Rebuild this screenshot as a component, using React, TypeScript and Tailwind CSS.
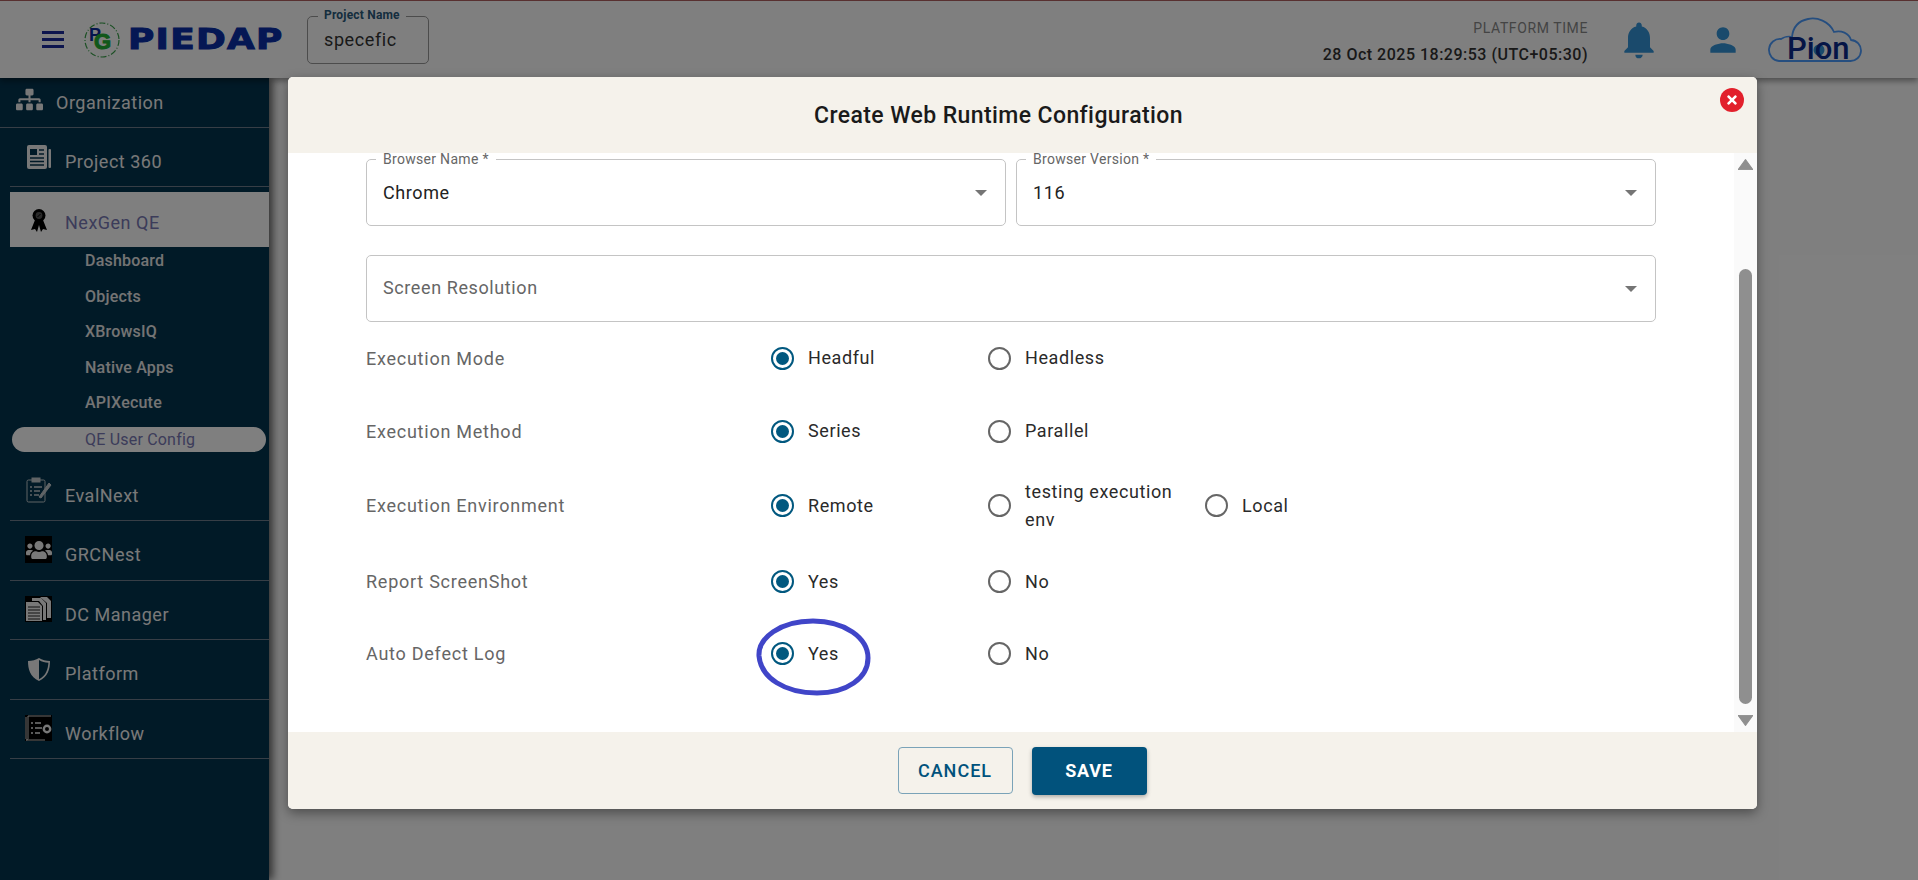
import { ReactNode } from "react"
import { FaSitemap, FaUsers, FaTimes } from "react-icons/fa"
import { MdNotifications, MdPerson } from "react-icons/md"

const RibbonIcon = () => (
  <svg viewBox="0 0 18 24" className="w-[18px] h-[24px]">
    <path d="M5 12 L1 22 L5 21 L7 24 L9 17 L11 24 L13 21 L17 22 L13 12 Z" fill="#000" />
    <circle cx="9" cy="7.5" r="6.5" fill="#000" />
    <circle cx="9" cy="7.5" r="3.4" fill="#555" />
    <path d="M7.5 9 L10.5 6" stroke="#000" strokeWidth="1" />
  </svg>
)

const PageIcon = () => (
  <svg viewBox="0 0 24 24" className="w-[24px] h-[24px]">
    <path d="M2 0 H18 Q20 0 20 2 V22 Q20 24 18 24 H2 Q0 24 0 22 V2 Q0 0 2 0 Z" fill="#f0f0f0" />
    <rect x="21.5" y="4" width="2.5" height="19" rx="1" fill="#f0f0f0" />
    <rect x="3" y="4" width="7" height="6" fill="#03344f" />
    <path d="M12 5 h5 M12 9 h5 M3 13 h14 M3 16.5 h14 M3 20 h14" stroke="#03344f" strokeWidth="1.6" />
  </svg>
)

const ClipboardIcon = () => (
  <svg viewBox="0 0 26 26" className="w-[26px] h-[26px]" fill="none" stroke="#c0c8cc" strokeWidth="1">
    <rect x="1" y="3" width="18" height="22" rx="1.5" />
    <rect x="6" y="1" width="8" height="4" fill="#c0c8cc" />
    <path d="M4 10 h2 M8 10 h8 M4 14 h2 M8 14 h6 M4 18 h2 M8 18 h5" strokeWidth="1.4" />
    <path d="M13 20 L23 6 L25 8 L15 21 Z" fill="#c0c8cc" />
  </svg>
)

const DocsIcon = () => (
  <svg viewBox="0 0 27 26" className="w-[27px] h-[26px]">
    <rect width="27" height="26" fill="#000" />
    <path d="M1 6 H13 L17 10 V25 H1 Z" fill="#f0f0f0" />
    <path d="M3 11 H15 M3 14 H15 M3 17 H15 M3 20 H15 M3 23 H15" stroke="#222" strokeWidth="1.2" />
    <path d="M18 10 V24 H21 V7 L16 2 H7 V5 H14 Z M22 7 V22 H26 V5 L22 1 H15 L22 7 Z" fill="#f0f0f0" />
  </svg>
)

const ShieldIcon = () => (
  <svg viewBox="0 0 24 24" className="w-[24px] h-[24px]">
    <path d="M12 1 C9 3 5 4 1 4 C1 12 3 20 12 24 C21 20 23 12 23 4 C19 4 15 3 12 1 Z" fill="#f0f0f0" />
    <path d="M12 3 C15 5 18 5.6 21.4 5.8 C21 12 19 19 12 22.2 Z" fill="#03344f" />
  </svg>
)

const WorkflowIcon = () => (
  <svg viewBox="0 0 27 26" className="w-[27px] h-[26px]">
    <rect width="27" height="26" fill="#000" />
    <path d="M3 1 H26 M3 1 V24 Q3 25 1 25 M1 25 H20 M1 2 V24" stroke="#d8d8d8" strokeWidth="1" fill="none" />
    <path d="M6 8 h2 M10 8 h6 M6 13 h2 M10 13 h7 M6 18 h2 M10 18 h5" stroke="#f0f0f0" strokeWidth="1.6" />
    <circle cx="22" cy="14" r="3.2" fill="none" stroke="#f0f0f0" strokeWidth="2.4" />
  </svg>
)

const subItems = ["Dashboard", "Objects", "XBrowsIQ", "Native Apps", "APIXecute"]

const navBottom = [
  { label: "EvalNext", icon: <ClipboardIcon /> },
  {
    label: "GRCNest",
    icon: (
      <div className="w-[27px] h-[27px] bg-black flex items-center justify-center">
        <FaUsers className="text-[#f0f0f0] text-[26px]" />
      </div>
    ),
  },
  { label: "DC Manager", icon: <DocsIcon /> },
  { label: "Platform", icon: <ShieldIcon /> },
  { label: "Workflow", icon: <WorkflowIcon /> },
]

const NavRow = ({ label, icon }: { label: string; icon: ReactNode }) => (
  <div className="h-[59.5px] ml-[10px] pl-[15px] pt-[9px] flex items-center border-b border-[#6e7d8c] text-[18px] tracking-[0.5px] text-[#f2f2f2]">
    <div className="w-[27px] -mt-[10px] flex justify-center">{icon}</div>
    <span className="ml-[13px]">{label}</span>
  </div>
)

const Sidebar = () => (
  <aside className="w-[269px] h-[802px] bg-[#03344f] shadow-[4px_0_8px_rgba(0,0,0,0.6)] shrink-0">
    <div className="h-[50px] pl-[16px] flex items-center border-b border-[#6e7d8c] text-[18px] tracking-[0.5px] text-[#f2f2f2]">
      <FaSitemap className="text-[#f0f0f0] text-[27px] -mt-[6px]" />
      <span className="ml-[13px]">Organization</span>
    </div>
    <div className="h-[59px] ml-[10px] pl-[15px] pt-[9px] flex items-center border-b border-[#6e7d8c] text-[18px] tracking-[0.5px] text-[#f2f2f2]">
      <div className="w-[27px] -mt-[10px] flex justify-center">
        <PageIcon />
      </div>
      <span className="ml-[13px]">Project 360</span>
    </div>
    <div className="h-[55px] mt-[5px] ml-[10px] pl-[15px] pt-[6px] flex items-center bg-white text-[18px] tracking-[0.5px] text-[#7878b4]">
      <div className="w-[27px] -mt-[6px] flex justify-center">
        <RibbonIcon />
      </div>
      <span className="ml-[13px]">NexGen QE</span>
    </div>
    <div className="-mt-[3.5px]">
      {subItems.map((s) => (
        <div key={s} className="h-[35.5px] pl-[85px] flex items-center text-[16px] font-medium tracking-[0.2px] text-[#e8e8e8]">
          {s}
        </div>
      ))}
    </div>
    <div className="h-[25px] mt-[6px] ml-[12px] mr-[3px] pl-[73px] flex items-center rounded-full bg-white text-[16px] tracking-[0.2px] text-[#7878b4]">
      QE User Config
    </div>
    <div className="mt-[9.5px]">
      {navBottom.map((item) => (
        <NavRow key={item.label} {...item} />
      ))}
    </div>
  </aside>
)

const Header = () => (
  <header className="h-[78px] bg-white border-t border-[#b06060] flex items-center shrink-0 shadow-[0_3px_6px_rgba(0,0,0,0.4)] relative z-10">
    <div className="ml-[42px] w-[22px] flex flex-col gap-[4.5px]">
      <div className="h-[2.5px] bg-[#1a2a9c]" />
      <div className="h-[2.5px] bg-[#1a2a9c]" />
      <div className="h-[2.5px] bg-[#1a2a9c]" />
    </div>
    <svg viewBox="0 0 38 36" className="ml-[19px] w-[38px] h-[36px]">
      <circle cx="19" cy="18" r="17" fill="none" stroke="#3aa04a" strokeWidth="1.2" strokeDasharray="6 2 1 2" />
      <text x="6" y="19" fontFamily="Liberation Sans" fontWeight="700" fontSize="18" fill="#0a2a9c">P</text>
      <text x="11" y="27" fontFamily="Liberation Sans" fontWeight="700" fontSize="22" fill="#22b035" stroke="#22b035" strokeWidth="1">G</text>
    </svg>
    <span className="ml-[7px] w-[153px] font-['DejaVu_Sans',sans-serif] font-bold text-[28px] leading-none text-[#0a2ea8] [-webkit-text-stroke:1px_#0a2ea8] tracking-[1px] scale-x-128 origin-left">
      PIEDAP
    </span>
    <div className="ml-[26px] relative w-[122px] h-[48px] border border-[#999] rounded-[5px] pl-[16px] flex items-center text-[18px] text-[#333] tracking-[0.6px]">
      <span className="absolute -top-[9px] left-[10px] px-[6px] bg-white text-[12px] leading-[14px] font-bold tracking-[0.2px] text-[#2a5a7c]">
        Project Name
      </span>
      specefic
    </div>
    <div className="ml-auto flex flex-col items-end w-[280px] mt-[3px]">
      <span className="text-[14px] leading-[20px] text-[#888] tracking-[0.6px]">PLATFORM TIME</span>
      <span className="mt-[7px] text-[16px] leading-[20px] font-medium text-[#333] tracking-[0.5px]">28 Oct 2025 18:29:53 (UTC+05:30)</span>
    </div>
    <MdNotifications className="ml-[29px] text-[#3494d8] text-[44px] shrink-0" />
    <MdPerson className="ml-[43px] text-[#3494d8] text-[38px] shrink-0" />
    <svg viewBox="0 0 93 45" className="ml-[25px] mr-[58px] w-[93px] h-[45px] shrink-0 overflow-visible">
      <path
        d="M12 44 H83 A10.5 10.5 0 0 0 84 23 C82 16 74 13 67 15 C62 4 50 0 41 2 C31 4 26 10 25 20 C22 19 17 20 14 22 A11 11 0 0 0 12 44 Z"
        fill="none"
        stroke="#4c9cff"
        strokeWidth="1.8"
      />
      <circle cx="52" cy="33" r="5.5" fill="#3494d8" />
      <text x="20" y="42" fontFamily="Roboto" fontWeight="500" fontSize="31" fill="#0a2a8c">Pion</text>
    </svg>
  </header>
)

const Arrow = () => (
  <svg viewBox="0 0 12 6" className="absolute right-[18px] top-1/2 -translate-y-1/2 w-[12px] h-[6px]">
    <path d="M0 0 H12 L6 6 Z" fill="#757575" />
  </svg>
)

const SelectField = ({ label, value, placeholder }: { label?: string; value?: string; placeholder?: string }) => (
  <div className={`relative h-[67px] border border-[#c4c4c4] rounded-[5px] pl-[16px] flex items-center text-[18px] tracking-[0.6px] ${value ? "" : "pb-[2px]"}`}>
    {label && (
      <span className="absolute -top-[9px] left-[9px] px-[7px] bg-white text-[14px] leading-[16px] text-[#666] tracking-[0.3px]">
        {label}
      </span>
    )}
    <span className={value ? "text-[#222]" : "text-[#666]"}>{value ?? placeholder}</span>
    <Arrow />
  </div>
)

const Radio = ({ label, checked }: { label: string; checked?: boolean }) => (
  <div className="w-[217px] flex items-center text-[18px] leading-[28px] tracking-[0.6px] text-[#2a2a2a]">
    <span
      className={`ml-[1px] w-[23px] h-[23px] rounded-full border-2 flex items-center justify-center shrink-0 ${
        checked ? "border-[#01587f]" : "border-[#666]"
      }`}
    >
      {checked && <span className="w-[13px] h-[13px] rounded-full bg-[#01587f]" />}
    </span>
    <span className="ml-[14px] max-w-[160px]">{label}</span>
  </div>
)

const rows = [
  { label: "Execution Mode", h: "h-[72px]", options: ["Headful", "Headless"] },
  { label: "Execution Method", h: "h-[74px]", options: ["Series", "Parallel"] },
  { label: "Execution Environment", h: "h-[75px]", options: ["Remote", "testing execution env", "Local"] },
  { label: "Report ScreenShot", h: "h-[77px]", options: ["Yes", "No"] },
  { label: "Auto Defect Log", h: "h-[67px]", options: ["Yes", "No"] },
]

const Modal = () => (
  <div className="w-[1469px] h-[732px] rounded-[5px] overflow-hidden bg-white flex flex-col shadow-[0_4px_12px_rgba(0,0,0,0.4)]">
    <div className="relative h-[76px] pr-[48px] pt-[2px] bg-[#f5f2eb] flex items-center justify-center text-[23px] font-medium text-[#1a1a1a] tracking-[0.4px] shrink-0">
      Create Web Runtime Configuration
      <div className="absolute left-[1432px] top-[11px] w-[24px] h-[24px] rounded-full bg-[#e2202c] flex items-center justify-center">
        <FaTimes className="text-white text-[14px]" />
      </div>
    </div>

    <div className="relative flex-1 overflow-hidden pl-[78px] pt-[6px]">
      <div className="w-[1290px]">
        <div className="grid grid-cols-2 gap-x-[10px]">
          <SelectField label="Browser Name *" value="Chrome" />
          <SelectField label="Browser Version *" value="116" />
        </div>
        <div className="mt-[29px]">
          <SelectField placeholder="Screen Resolution" />
        </div>
        {rows.map((r) => (
          <div key={r.label} className={`${r.h} flex items-center`}>
            <div className="w-[404px] text-[18px] tracking-[0.75px] text-[#666]">{r.label}</div>
            {r.options.map((o, i) => (
              <Radio key={o} label={o} checked={i === 0} />
            ))}
          </div>
        ))}
      </div>

      <div className="absolute right-0 top-0 bottom-0 w-[23px] bg-[#fafafa] flex flex-col items-center">
        <svg viewBox="0 0 14 10" className="mt-[6px] w-[15px] h-[11px]">
          <path d="M7 0.5 L14 10 H0 Z" fill="#8f8f8f" stroke="#8f8f8f" strokeLinejoin="round" />
        </svg>
        <div className="mt-[99px] w-[13px] h-[435px] rounded-full bg-[#8f8f8f]" />
        <svg viewBox="0 0 14 10" className="mt-[11px] w-[15px] h-[11px]">
          <path d="M0 0 H14 L7 9.5 Z" fill="#8f8f8f" stroke="#8f8f8f" strokeLinejoin="round" />
        </svg>
      </div>

      <svg viewBox="0 0 117 78" className="absolute left-[467px] top-[465px] w-[117px] h-[78px]">
        <path
          d="M4 38 C3 20 25 3 58 3 C90 3 113 20 113 40 C113 60 92 75 62 75 C30 75 6 60 4 38 Z"
          fill="none"
          stroke="#4045c8"
          strokeWidth="5"
        />
      </svg>
    </div>

    <div className="h-[77px] bg-[#f5f2eb] flex items-center justify-center gap-[19px] shrink-0">
      <button className="ml-[-1px] w-[115px] h-[47px] border border-[#7aa3b8] rounded-[4px] text-[18px] font-medium tracking-[1px] text-[#01527c]">
        CANCEL
      </button>
      <button className="w-[115px] h-[48px] rounded-[4px] bg-[#01527c] text-[18px] font-bold tracking-[0.8px] text-white shadow-[0_2px_4px_rgba(0,0,0,0.3)]">
        SAVE
      </button>
    </div>
  </div>
)

const App = () => {
  return (
    <div className="relative h-screen overflow-hidden bg-white font-['Roboto',sans-serif]">
      <Header />
      <Sidebar />
      <div className="absolute inset-0 z-20 bg-black/50 pl-[288px] pt-[77px]">
        <Modal />
      </div>
    </div>
  )
}

export default App
